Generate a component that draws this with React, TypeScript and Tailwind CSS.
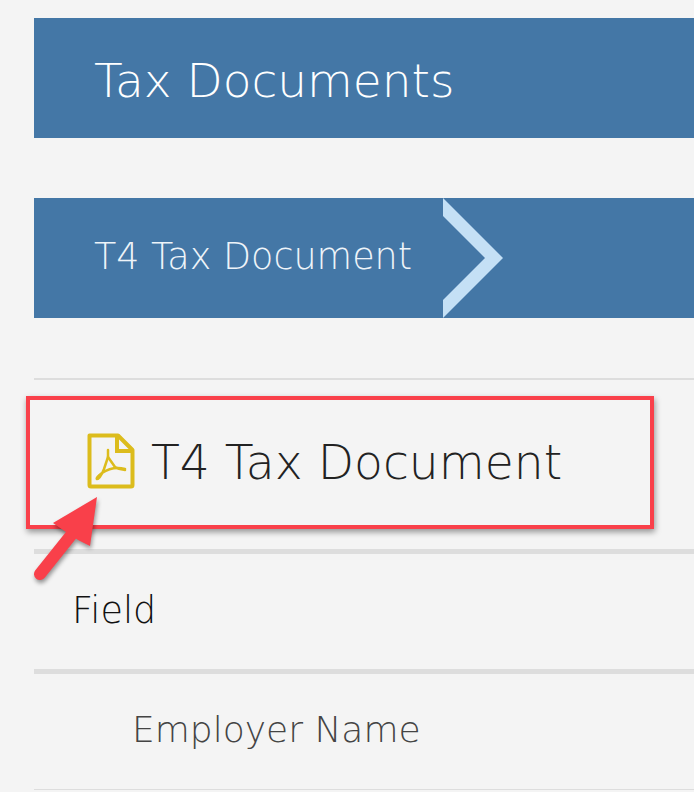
const font = "font-['DejaVu_Sans','Liberation_Sans',sans-serif]"

function PdfIcon() {
  return (
    <svg viewBox="0 0 48 56" className="w-[48px] h-[56px] shrink-0" fill="none">
      <path d="M2.500 2.500H31L45.500 17V52a1.500 1.500 0 0 1-1.500 1.500H4A1.500 1.500 0 0 1 2.500 52Z" stroke="#dcbc1c" strokeWidth="4" strokeLinejoin="round" />
      <path d="M30 3V18H45" stroke="#dcbc1c" strokeWidth="4" />
      <path d="M21 17V24L28 34C31 36 35 37 38 37" stroke="#dcbc1c" strokeWidth="2.500" strokeLinecap="round" strokeLinejoin="round" />
      <path d="M38 36C30 34 21 36 15 40C11 43 9 45 10 46C12 46 15 41 17 36L21 24" stroke="#dcbc1c" strokeWidth="2.500" strokeLinecap="round" strokeLinejoin="round" />
    </svg>
  )
}

function RedArrow() {
  return (
    <svg viewBox="0 0 80 100" className="absolute left-[24px] top-[490px] w-[80px] h-[100px] drop-shadow-[1px_3px_2px_rgba(0,0,0,0.4)]">
      <path d="M16 84L48 44" stroke="#f9404a" strokeWidth="12" strokeLinecap="round" />
      <path d="M73 7L66 56L54 50L39 40L29 33Z" fill="#f9404a" />
    </svg>
  )
}

export default function App() {
  return (
    <div className={`relative w-[694px] h-[792px] overflow-hidden bg-[#f4f4f4] pl-[34px] pt-[18px] ${font}`}>
      <div className="h-[120px] bg-[#4477a6] flex items-center pl-[60px] pt-[4px]">
        <h1 className="text-[47px] font-extralight text-white leading-none">Tax Documents</h1>
      </div>

      <div className="mt-[60px] h-[120px] bg-[#4477a6] flex items-center pl-[60px] pb-[2px]">
        <span className="text-[36.500px] font-extralight text-[#eef4f9] leading-none">T4 Tax Document</span>
        <svg viewBox="0 0 60 120" className="absolute left-[443px] top-[198px] w-[60px] h-[120px]">
          <path d="M0 0L60 60L0 120V102L42 60L0 18Z" fill="#c4e0f5" />
        </svg>
      </div>

      <div className="mt-[60px] h-[2px] bg-[#dddddd]" />
      <div className="h-[169px] flex items-center pl-[53px] pb-[8px]">
        <PdfIcon />
        <span className="ml-[16px] mt-[4px] text-[47.200px] font-extralight text-[#222222] leading-none">T4 Tax Document</span>
      </div>

      <div className="h-[5px] bg-[#dddddd]" />
      <div className="h-[115px] flex items-center pl-[38px]">
        <span className="text-[36.500px] font-extralight text-[#111111] leading-none">Field</span>
      </div>
      <div className="h-[5px] bg-[#dddddd]" />
      <div className="h-[115px] flex items-center pl-[98px] pb-[3px]">
        <span className="text-[36px] font-extralight text-[#444444] leading-none">Employer Name</span>
      </div>
      <div className="h-[1px] bg-[#dddddd]" />

      {/* annotation */}
      <div className="absolute left-[26px] top-[396px] w-[628px] h-[133px] border-[4px] border-[#f9404a] shadow-[1px_3px_6px_rgba(0,0,0,0.4)]" />
      <RedArrow />
    </div>
  )
}
